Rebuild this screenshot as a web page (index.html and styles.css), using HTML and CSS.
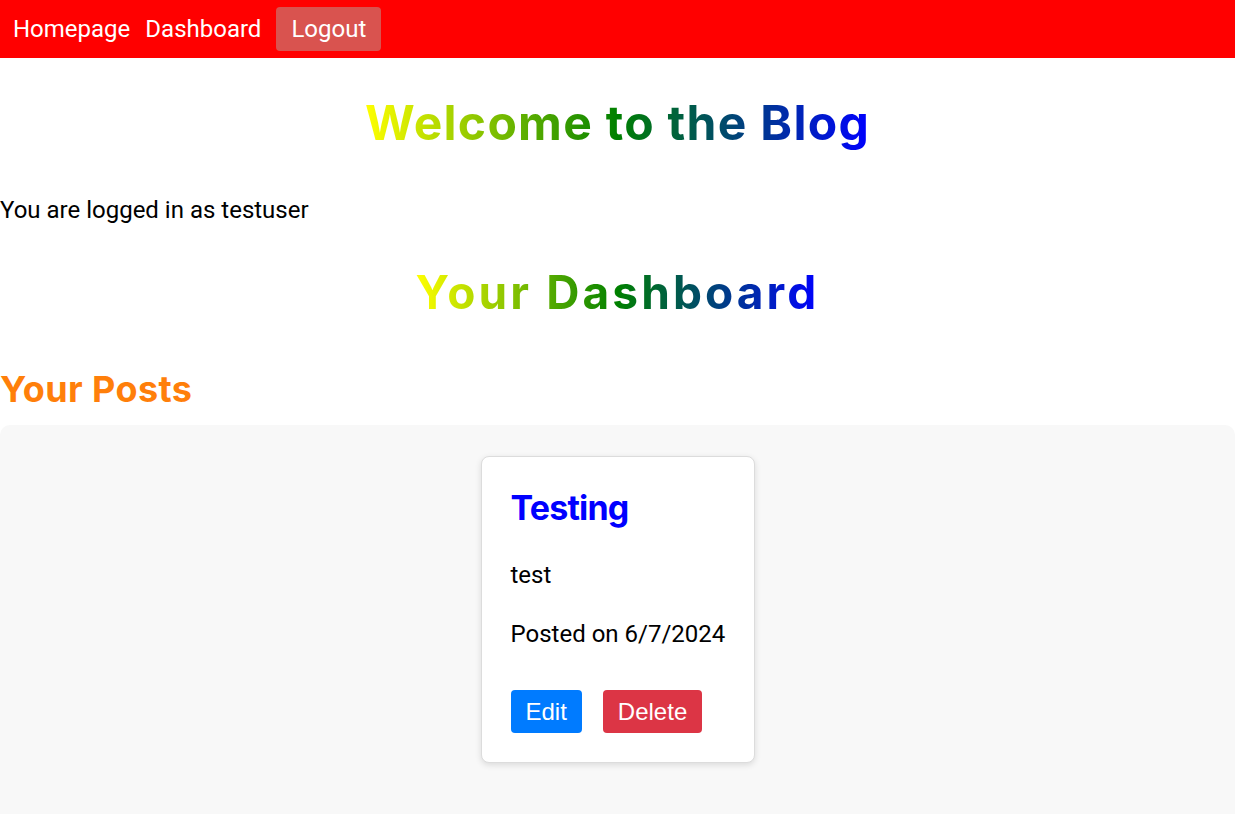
FILE: index.html
```html
<!DOCTYPE html>
<html lang="en">
<head>
<meta charset="utf-8">
<title>Dashboard</title>
<link rel="stylesheet" href="styles.css">
</head>
<body>
<nav class="navbar">
  <a class="nav-link" href="#">Homepage</a>
  <a class="nav-link" href="#">Dashboard</a>
  <button class="logout-btn" type="button">Logout</button>
</nav>
<main class="main">
  <h1 class="gradient-title welcome">Welcome to the Blog</h1>
  <p class="logged-in">You are logged in as testuser</p>
  <h2 class="gradient-title dashboard-title">Your Dashboard</h2>
  <h3 class="posts-title">Your Posts</h3>
  <section class="posts-area">
    <article class="post-card">
      <h4 class="post-title">Testing</h4>
      <p class="post-body">test</p>
      <p class="post-date">Posted on 6/7/2024</p>
      <div class="post-actions">
        <button class="btn btn-edit" type="button">Edit</button>
        <button class="btn btn-delete" type="button">Delete</button>
      </div>
    </article>
  </section>
</main>
</body>
</html>
```

FILE: styles.css
```css
* { box-sizing: border-box; }

html, body {
  margin: 0;
  padding: 0;
  background: #fff;
}

body {
  font-family: Roboto, "Liberation Sans", Arial, sans-serif;
  font-size: 24px;
  line-height: 1.2;
  color: #000;
  overflow: hidden;
}

.navbar {
  height: 58px;
  background: #ff0000;
  display: flex;
  align-items: center;
  padding: 0 13px;
  gap: 15px;
}

.nav-link {
  color: #fff;
  text-decoration: none;
  font-size: 24px;
  line-height: 28px;
}

.logout-btn {
  font-family: Roboto, "Liberation Sans", Arial, sans-serif;
  font-size: 24px;
  line-height: 28px;
  color: #fff;
  background: #d9534f;
  border: none;
  border-radius: 4px;
  padding: 8px 15px;
}

.gradient-title {
  font-family: Inter, "Open Sans", sans-serif;
  font-weight: 700;
  width: fit-content;
  margin-left: auto;
  margin-right: auto;
  background: linear-gradient(to right, #ffff00, #008000, #0000ff);
  -webkit-background-clip: text;
  background-clip: text;
  color: transparent;
  line-height: 1.2;
}

.welcome {
  font-size: 48px;
  letter-spacing: 1.3px;
  margin-top: 36px;
  margin-bottom: 0;
}

.logged-in {
  margin: 44px 0 0;
  line-height: 28.8px;
}

.dashboard-title {
  font-size: 46px;
  letter-spacing: 3.1px;
  margin-top: 41px;
  margin-bottom: 0;
}

.posts-title {
  font-family: Inter, "Open Sans", sans-serif;
  font-weight: 700;
  font-size: 36px;
  line-height: 1.2;
  color: #ff7f0a;
  letter-spacing: 0.4px;
  margin: 47px 0 0;
}

.posts-area {
  margin-top: 14px;
  background: #f8f8f8;
  border-radius: 10px;
  padding: 31px 0 60px;
  display: flex;
  justify-content: center;
}

.post-card {
  width: 274px;
  background: #fff;
  border: 1px solid #dcdcdc;
  border-radius: 8px;
  box-shadow: 0 2px 6px rgba(0, 0, 0, 0.12);
  padding: 31px 29px 29px;
}

.post-title {
  font-family: Inter, "Open Sans", sans-serif;
  font-weight: 700;
  font-size: 34px;
  line-height: 1.2;
  color: #0000ff;
  letter-spacing: -0.8px;
  margin: 0;
}

.post-body {
  margin: 32px 0 0;
  line-height: 28.8px;
}

.post-date {
  margin: 31px 0 0;
  line-height: 28.8px;
  white-space: nowrap;
}

.post-actions {
  display: flex;
  gap: 21px;
  margin-top: 41px;
}

.btn {
  font-family: "Liberation Sans", Arial, sans-serif;
  font-size: 24px;
  line-height: 27px;
  color: #fff;
  border: none;
  border-radius: 4px;
  padding: 8px 15px;
}

.btn-edit { background: #007bff; }
.btn-delete { background: #dc3545; }
```
